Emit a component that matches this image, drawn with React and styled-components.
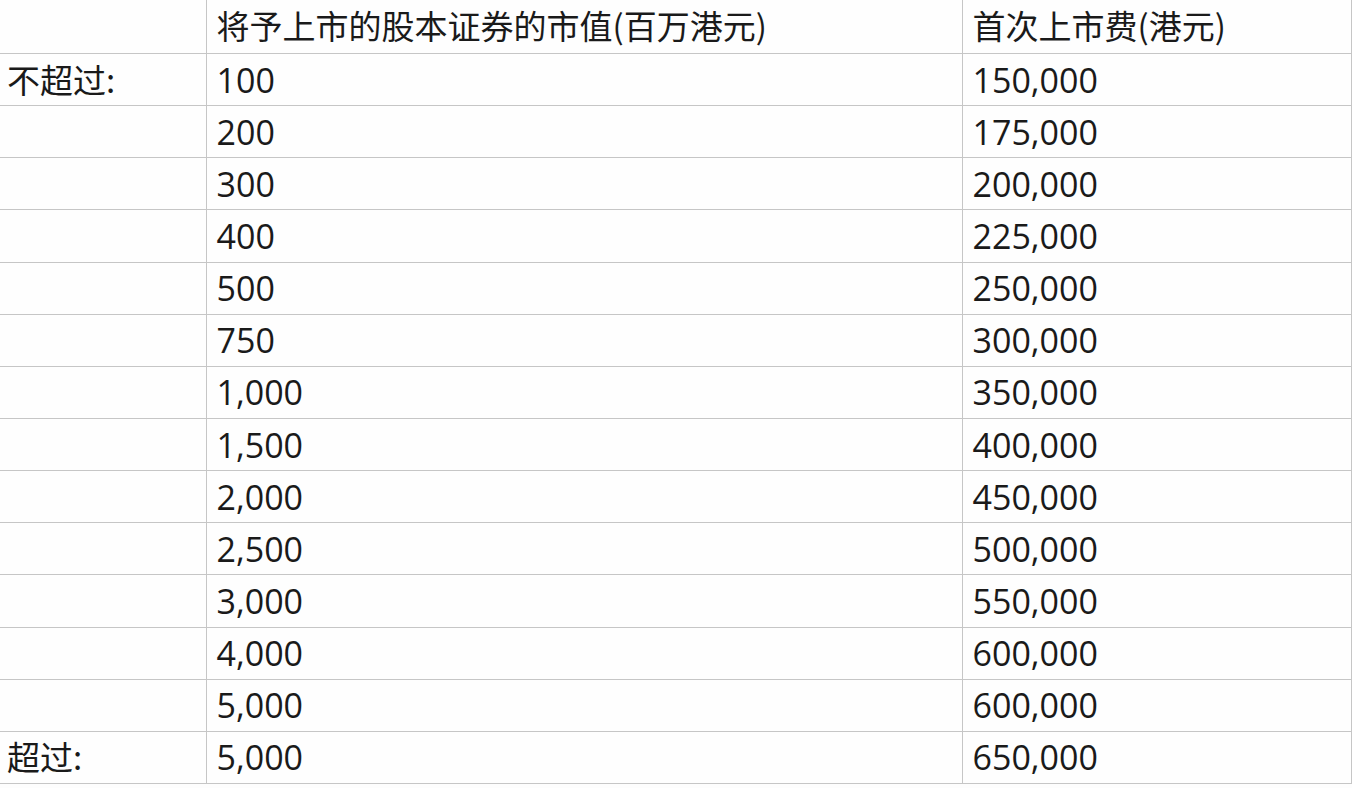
import React from 'react';
import styled, { createGlobalStyle } from 'styled-components';

const GlobalStyle = createGlobalStyle`
  html, body {
    margin: 0;
    padding: 0;
    background: #fdfdfd;
  }
  body {
    font-family: "Open Sans", "Noto Sans CJK SC", sans-serif;
    color: #1a1a1a;
  }
`;

const Table = styled.table`
  border-collapse: collapse;
  table-layout: fixed;
  width: 1351px;
  font-size: 34px;
  line-height: 1;
`;

const Col = styled.col`
  width: ${props => props.w}px;
`;

const Cell = styled.td`
  height: 51.15px;
  padding: 0 0 0 ${props => (props.first ? '7px' : '10px')};
  border-bottom: 1px solid #c6c6c6;
  border-left: ${props => (props.first ? 'none' : '1px solid #c6c6c6')};
  border-right: ${props => (props.last ? '1px solid #c6c6c6' : 'none')};
  vertical-align: middle;
  white-space: nowrap;
  text-align: left;
  font-weight: 380;
  background: #fefefe;
`;

const HeadCell = styled(Cell)`
  height: 50px;
  font-size: 33px;
  font-weight: 400;
  font-family: "Noto Sans CJK SC", "Open Sans", sans-serif;
  padding-bottom: 3px;
`;

const Label = styled.span`
  font-size: 33px;
  font-weight: 400;
  font-family: "Noto Sans CJK SC", "Open Sans", sans-serif;
`;

const rows = [
  ['不超过:', '100', '150,000'],
  ['', '200', '175,000'],
  ['', '300', '200,000'],
  ['', '400', '225,000'],
  ['', '500', '250,000'],
  ['', '750', '300,000'],
  ['', '1,000', '350,000'],
  ['', '1,500', '400,000'],
  ['', '2,000', '450,000'],
  ['', '2,500', '500,000'],
  ['', '3,000', '550,000'],
  ['', '4,000', '600,000'],
  ['', '5,000', '600,000'],
  ['超过:', '5,000', '650,000'],
];

export default function App() {
  return (
    <>
      <GlobalStyle />
      <Table>
        <colgroup>
          <Col w={206} />
          <Col w={756} />
          <Col w={389} />
        </colgroup>
        <thead>
          <tr>
            <HeadCell as="th" first />
            <HeadCell as="th">将予上市的股本证券的市值(百万港元)</HeadCell>
            <HeadCell as="th" last>首次上市费(港元)</HeadCell>
          </tr>
        </thead>
        <tbody>
          {rows.map((r, i) => (
            <tr key={i}>
              <Cell first><Label>{r[0]}</Label></Cell>
              <Cell>{r[1]}</Cell>
              <Cell last>{r[2]}</Cell>
            </tr>
          ))}
        </tbody>
      </Table>
    </>
  );
}
